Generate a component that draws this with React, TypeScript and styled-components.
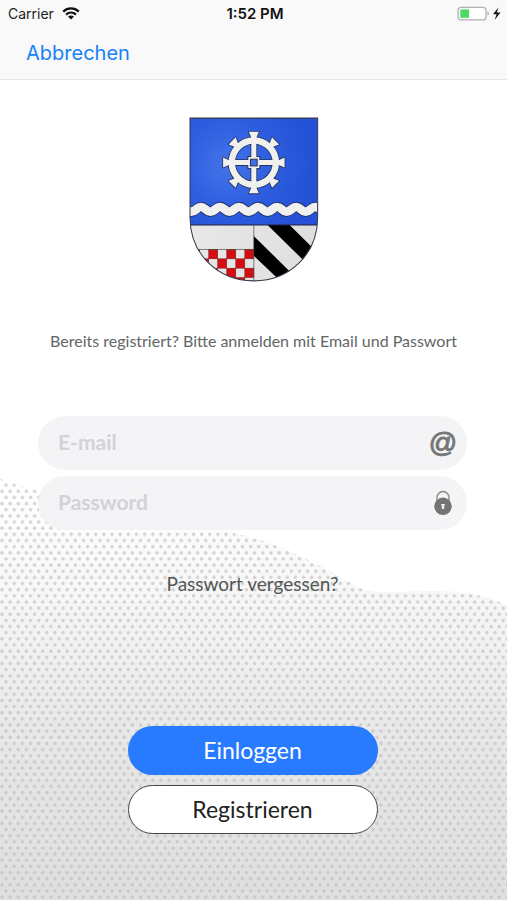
import React from "react";
import styled, { createGlobalStyle, css } from "styled-components";

const GlobalStyle = createGlobalStyle`
  *, *::before, *::after { box-sizing: border-box; }
  body { margin: 0; background: #fff; font-family: Lato, "Open Sans", sans-serif; }
`;

const Page = styled.div`
  display: flex;
  flex-direction: column;
  min-height: 100vh;
`;

const TopBar = styled.header`
  background: #f9f9f9;
  border-bottom: 1px solid #e6e6e6;
  font-family: Inter, sans-serif;
`;

const StatusBar = styled.div`
  display: grid;
  grid-template-columns: 1fr auto 1fr;
  align-items: center;
  height: 27px;
  padding: 0 5px 0 8px;
  font-size: 14px;
  color: #222;
`;

const Carrier = styled.div`
  display: flex;
  align-items: center;
  gap: 8px;
`;

const Clock = styled.div`
  font-size: 15px;
  line-height: 20px;
  font-weight: 600;
  color: #111;
`;

const Power = styled.div`
  display: flex;
  align-items: center;
  justify-content: flex-end;
`;

const Nav = styled.nav`
  display: flex;
  align-items: center;
  height: 52px;
  padding: 0 26px;
`;

const CancelButton = styled.button`
  border: 0;
  padding: 0;
  background: none;
  font: 400 20px/26px Inter, sans-serif;
  color: #1781f5;
  cursor: pointer;
`;

const Main = styled.main`
  position: relative;
  isolation: isolate;
  flex: 1;
  display: flex;
  flex-direction: column;
  align-items: center;
  padding: 37px 0 66px;
`;

const Backdrop = styled.svg`
  position: absolute;
  inset: auto 0 0;
  z-index: -1;
  width: 100%;
  height: 424px;
`;

const Intro = styled.p`
  margin: 47px 0 0;
  padding: 0 24px;
  text-align: center;
  font-size: 16px;
  line-height: 24px;
  color: #626664;
`;

const LoginForm = styled.form`
  flex: 1;
  display: flex;
  flex-direction: column;
  align-items: center;
  width: 100%;
  padding: 0 40px 0 38px;
  margin-top: 63px;
`;

const Fields = styled.div`
  display: flex;
  flex-direction: column;
  gap: 6px;
  width: 100%;
`;

const Field = styled.label`
  display: flex;
  align-items: center;
  height: 54px;
  padding: 0 10px 0 20px;
  border-radius: 27px;
  background: rgba(243, 243, 246, 0.92);
`;

const Input = styled.input`
  flex: 1;
  min-width: 0;
  border: 0;
  padding: 0 0 2px;
  outline: 0;
  background: none;
  font: 700 21px/28px Lato, sans-serif;
  color: #444;
  &::placeholder { color: #d2d2d7; opacity: 1; }
`;

const FieldIcon = styled.span`
  display: flex;
  justify-content: center;
  width: 28px;
  font: 400 28px/32px "Liberation Sans", sans-serif;
  -webkit-text-stroke: 1px #777;
  color: #777;
`;

const ForgotLink = styled.a`
  margin-top: 41px;
  font-size: 19px;
  line-height: 26px;
  color: #535756;
  text-decoration: none;
`;

const Actions = styled.div`
  display: flex;
  flex-direction: column;
  gap: 10px;
  width: 250px;
  margin: auto 0 0;
`;

const ActionButton = styled.button<{ $primary?: boolean }>`
  height: 49px;
  padding: 0 20px 2px;
  border-radius: 25px;
  font: 400 23px/28px Lato, sans-serif;
  cursor: pointer;
  ${({ $primary }) =>
    $primary
      ? css`border: 0; background: #287aff; color: #fff;`
      : css`border: 1px solid #444; background: #fff; color: #222;`}
`;

const WifiIcon = () => (
  <svg width="18" height="13" viewBox="0 0 18 13" aria-hidden="true">
    <g fill="none" stroke="#111" strokeWidth="2.2">
      <path d="M1.2 4.6C5.6.4 12.4.4 16.8 4.6" />
      <path d="M4 7.6c2.9-2.6 7.1-2.6 10 0" />
    </g>
    <path d="M9 12.4 6 9.5c1.7-1.5 4.3-1.5 6 0z" fill="#111" />
  </svg>
);

const BatteryIcon = () => (
  <svg width="45" height="16" viewBox="0 0 45 16" aria-hidden="true">
    <rect x="1" y="1.3" width="28" height="12.6" rx="3" fill="#fff" stroke="#b0b0b0" strokeWidth="1.3" />
    <rect x="3.3" y="3.4" width="8.7" height="8.4" fill="#4cd964" />
    <path d="M30.5 5.6c1.8.5 1.8 3.5 0 4z" fill="#a9a9a9" />
    <path d="M41.5 1.4 36 8.3h3.6L37.6 14 43.5 6.6h-3.7z" fill="#111" />
  </svg>
);

const LockIcon = () => (
  <svg width="20" height="26" viewBox="0 0 20 26" aria-hidden="true">
    <path d="M4 11V7.5a6 6 0 0 1 12 0V11" fill="none" stroke="#858585" strokeWidth="1.3" />
    <circle cx="10" cy="16.3" r="8.7" fill="#747474" />
    <path d="M8 14h4l-.8 2.4V19H8.8v-2.6z" fill="#eee" />
  </svg>
);

const wave = (y: number) => {
  let d = `M-23 ${y + 14}`;
  for (let x = -23; x < 430; x += 57) {
    d += ` C${x + 13} ${y + 14} ${x + 16} ${y} ${x + 29} ${y} S${x + 44} ${y + 14} ${x + 57} ${y + 14}`;
  }
  return d;
};

const redCells = [
  [32, 418], [86, 418], [140, 418], [194, 418],
  [59, 446], [113, 446], [167, 446],
  [86, 474], [140, 474], [194, 474],
  [113, 502], [167, 502],
];

const spokes = [0, 45, 90, 135, 180, 225, 270, 315];

const Crest = () => (
  <svg width="130" height="165" viewBox="27 22 389 493" role="img" aria-label="Wappen">
    <defs>
      <clipPath id="shield">
        <path d="M30 25H412V322C412 430 330 512 221 512S30 430 30 322Z" />
      </clipPath>
      <radialGradient id="azure" gradientUnits="userSpaceOnUse" cx="145" cy="165" r="250">
        <stop offset="0" stopColor="#4475ea" />
        <stop offset=".5" stopColor="#2f5ee0" />
        <stop offset="1" stopColor="#2451d5" />
      </radialGradient>
      <linearGradient id="silver" x1="0" y1="0" x2="1" y2="0">
        <stop offset="0" stopColor="#e8e8e8" />
        <stop offset="1" stopColor="#dedede" />
      </linearGradient>
    </defs>
    <g clipPath="url(#shield)">
      <rect x="27" y="22" width="389" height="323" fill="url(#azure)" />
      <rect x="27" y="345" width="389" height="170" fill="url(#silver)" />
      <path d={wave(291)} fill="none" stroke="#24366e" strokeWidth="31" />
      <path d={wave(291)} fill="none" stroke="#f0f0ef" strokeWidth="26" />
      {redCells.map(([x, y]) => (
        <rect key={`${x}-${y}`} x={x} y={y} width="27" height="28" fill="#d40d12" stroke="#702020" strokeWidth="1.5" />
      ))}
      <path d="M262 345H328L412 428V492ZM221 378 340 495V550L221 437Z" fill="#000" />
      <path d="M221 345V512M30 418H221" stroke="#444" strokeWidth="2" />
      <path d="M30 345H412" stroke="#223" strokeWidth="3" />
    </g>
    <g stroke="#25355f" strokeWidth="5" strokeLinejoin="round">
      {spokes.map((angle) => (
        <path key={angle} transform={`rotate(${angle} 221 158)`} d="M213 92V82L206 66H236L229 82V92Z" />
      ))}
    </g>
    <circle cx="221" cy="158" r="66" fill="none" stroke="#25355f" strokeWidth="24" />
    <path d="M221 95V221M158 158H284" stroke="#25355f" strokeWidth="20" />
    <rect x="203" y="140" width="36" height="36" fill="#f0f0ef" stroke="#25355f" strokeWidth="3" />
    <g fill="#f0f0ef">
      {spokes.map((angle) => (
        <path key={angle} transform={`rotate(${angle} 221 158)`} d="M213 92V82L206 66H236L229 82V92Z" />
      ))}
    </g>
    <circle cx="221" cy="158" r="66" fill="none" stroke="#f0f0ef" strokeWidth="19" />
    <path d="M221 95V221M158 158H284" stroke="#f0f0ef" strokeWidth="15" />
    <rect x="211" y="148" width="20" height="20" fill="#3f70e8" stroke="#25355f" strokeWidth="3" />
    <path d="M30 25H412V322C412 430 330 512 221 512S30 430 30 322Z" fill="none" stroke="#34394a" strokeWidth="3" />
  </svg>
);

const HILL =
  "M0 3C60 22 120 42 180 48C245 56 275 68 300 80C330 94 350 108 367 115C400 118 430 113 465 117C490 121 500 126 507 130V424H0Z";

const DottedHill = () => (
  <Backdrop viewBox="0 0 507 424" preserveAspectRatio="none" aria-hidden="true">
    <defs>
      <linearGradient id="haze" x1="0" y1="0" x2="0" y2="1">
        <stop offset="0" stopColor="#fff" />
        <stop offset=".25" stopColor="#f8f8f8" />
        <stop offset=".6" stopColor="#e8e8e8" />
        <stop offset="1" stopColor="#dfdfdf" />
      </linearGradient>
      <pattern id="dots" width="8.15" height="12.3" patternUnits="userSpaceOnUse">
        <g fill="#bbb" fillOpacity=".65">
          <circle cx="2" cy="3" r="1.7" />
          <circle cx="6.1" cy="9.15" r="1.7" />
        </g>
      </pattern>
    </defs>
    <path d={HILL} fill="url(#haze)" />
    <path d={HILL} fill="url(#dots)" />
  </Backdrop>
);

export default function App() {
  return (
    <>
      <GlobalStyle />
      <Page>
        <TopBar>
          <StatusBar>
            <Carrier>
              Carrier
              <WifiIcon />
            </Carrier>
            <Clock>1:52 PM</Clock>
            <Power>
              <BatteryIcon />
            </Power>
          </StatusBar>
          <Nav>
            <CancelButton type="button">Abbrechen</CancelButton>
          </Nav>
        </TopBar>
        <Main>
          <DottedHill />
          <Crest />
          <Intro>Bereits registriert? Bitte anmelden mit Email und Passwort</Intro>
          <LoginForm onSubmit={(event) => event.preventDefault()}>
            <Fields>
              <Field>
                <Input type="email" placeholder="E-mail" aria-label="E-mail" />
                <FieldIcon aria-hidden="true">@</FieldIcon>
              </Field>
              <Field>
                <Input type="password" placeholder="Password" aria-label="Password" />
                <FieldIcon aria-hidden="true">
                  <LockIcon />
                </FieldIcon>
              </Field>
            </Fields>
            <ForgotLink href="#passwort">Passwort vergessen?</ForgotLink>
            <Actions>
              <ActionButton type="submit" $primary>Einloggen</ActionButton>
              <ActionButton type="button">Registrieren</ActionButton>
            </Actions>
          </LoginForm>
        </Main>
      </Page>
    </>
  );
}
